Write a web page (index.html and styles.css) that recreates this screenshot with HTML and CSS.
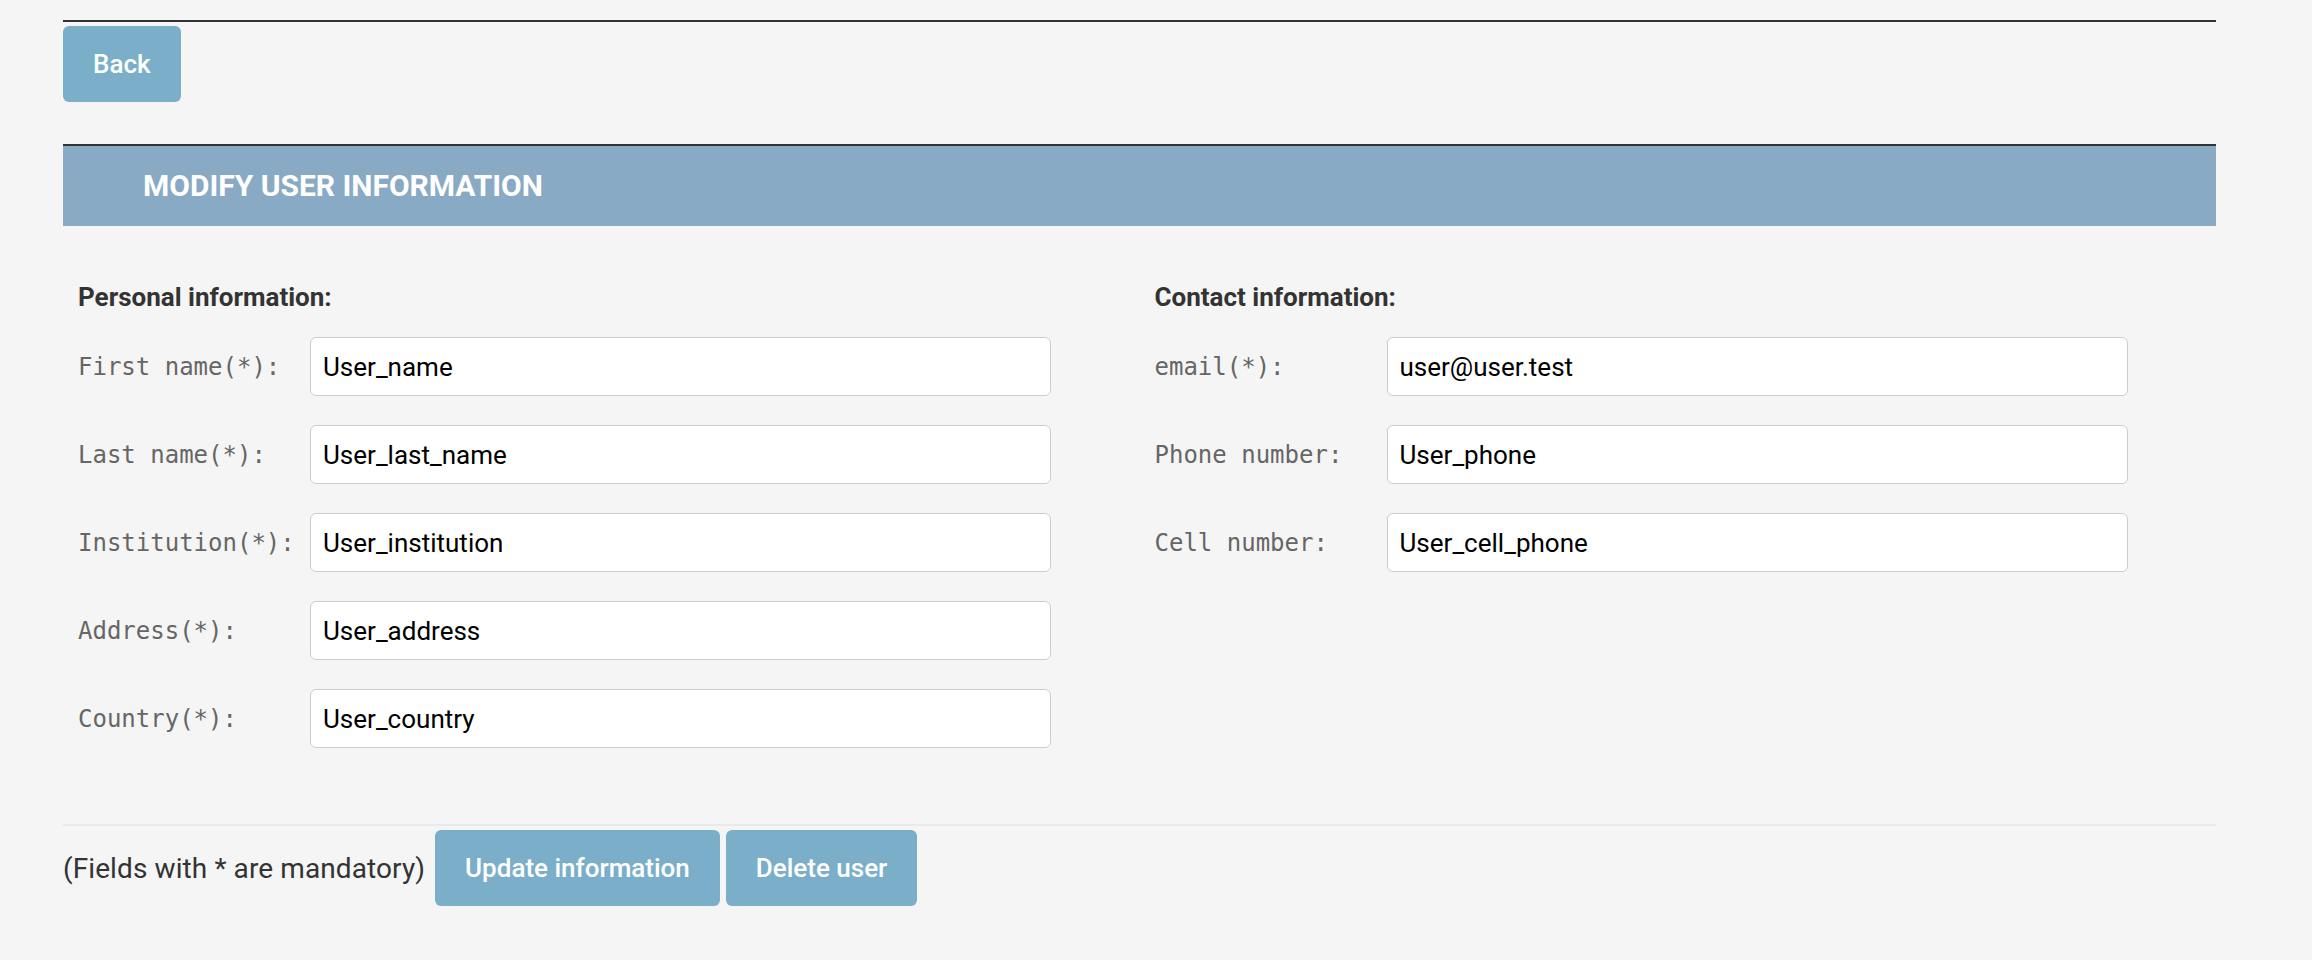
FILE: index.html
```html
<!DOCTYPE html>
<html lang="en">
<head>
    <meta charset="UTF-8">
    <title>Modify user information</title>
    <link rel="stylesheet" href="styles.css">
</head>
<body>

<div class="page">
    <div class="top-bar">
        <button class="btn">Back</button>
    </div>

    <div class="panel">
        <div class="panel-title">MODIFY USER INFORMATION</div>

        <form class="user-form">
            <div class="columns">
                <div class="column">
                    <h3>Personal information:</h3>
                    <div class="field">
                        <label for="firstName">First name(*):</label>
                        <input type="text" id="firstName" value="User_name">
                    </div>
                    <div class="field">
                        <label for="lastName">Last name(*):</label>
                        <input type="text" id="lastName" value="User_last_name">
                    </div>
                    <div class="field">
                        <label for="institution">Institution(*):</label>
                        <input type="text" id="institution" value="User_institution">
                    </div>
                    <div class="field">
                        <label for="address">Address(*):</label>
                        <input type="text" id="address" value="User_address">
                    </div>
                    <div class="field">
                        <label for="country">Country(*):</label>
                        <input type="text" id="country" value="User_country">
                    </div>
                </div>

                <div class="column">
                    <h3>Contact information:</h3>
                    <div class="field">
                        <label for="email">email(*):</label>
                        <input type="text" id="email" value="user@user.test">
                    </div>
                    <div class="field">
                        <label for="phone">Phone number:</label>
                        <input type="text" id="phone" value="User_phone">
                    </div>
                    <div class="field">
                        <label for="cell">Cell number:</label>
                        <input type="text" id="cell" value="User_cell_phone">
                    </div>
                </div>
            </div>

            <div class="form-footer">
                <span class="note">(Fields with * are mandatory)</span>
                <button type="button" class="btn">Update information</button>
                <button type="button" class="btn">Delete user</button>
            </div>
        </form>
    </div>
</div>

</body>
</html>
```

FILE: styles.css
```css
body {
    margin: 0;
    background-color: #f5f5f5;
    font-family: Roboto, "Liberation Sans", sans-serif;
    color: #333;
}

.page {
    margin-left: 63px;
    width: 2153px;
    padding-top: 20px;
}

.top-bar {
    border-top: 2px solid #333;
    padding-top: 4px;
    height: 124px;
    box-sizing: border-box;
}

.btn {
    background-color: #7bafc9;
    color: white;
    border: none;
    border-radius: 6px;
    height: 76px;
    padding: 0 30px;
    font-family: Roboto, sans-serif;
    font-size: 26px;
    font-weight: 500;
    cursor: pointer;
}

.panel {
    border-top: 2px solid #333;
}

.panel-title {
    background-color: #89aac4;
    color: white;
    height: 80px;
    line-height: 80px;
    padding-left: 80px;
    font-size: 30px;
    font-weight: bold;
}

.columns {
    display: flex;
}

.column {
    width: 50%;
    padding: 0 15px;
}

h3 {
    margin: 56px 0 25px;
    font-size: 26px;
    font-weight: bold;
    line-height: 30px;
}

.field {
    display: flex;
    align-items: center;
    margin-bottom: 29px;
}

label {
    width: 232px;
    flex-shrink: 0;
    font-family: "DejaVu Sans Mono", monospace;
    font-size: 24px;
    color: #666;
}

input[type="text"] {
    width: 741px;
    height: 59px;
    box-sizing: border-box;
    padding: 0 12px;
    border: 1px solid #ccc;
    border-radius: 6px;
    background: white;
    font-family: Roboto, sans-serif;
    font-size: 26px;
    color: black;
}

.form-footer {
    margin-top: 47px;
    border-top: 2px solid #eaeaea;
    padding-top: 4px;
    display: flex;
    align-items: center;
    gap: 6px;
}

.note {
    font-size: 28px;
    margin-right: 4px;
    letter-spacing: 0.1px;
}
```
